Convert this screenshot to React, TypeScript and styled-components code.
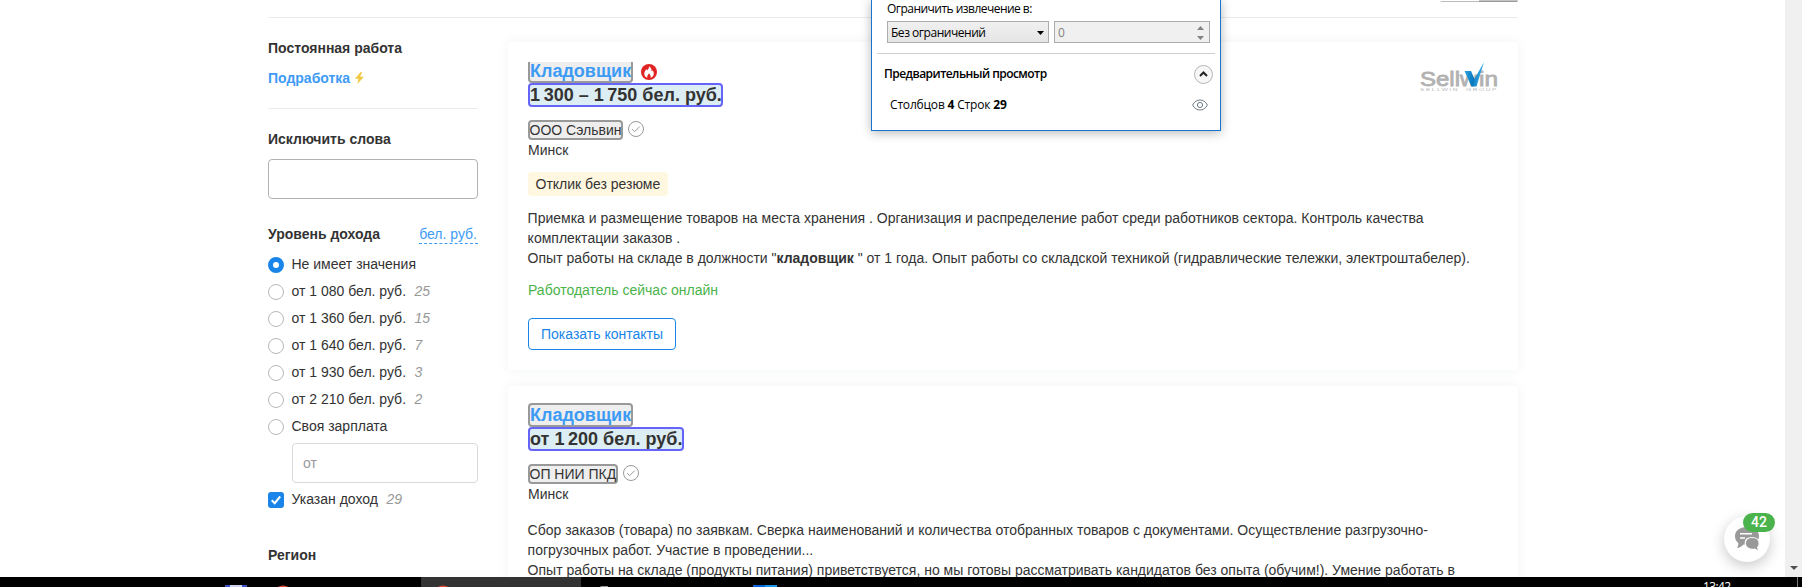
import React from "react";
import styled, { createGlobalStyle, css } from "styled-components";

const Global = createGlobalStyle`
  * { box-sizing: border-box; }
  body { margin: 0; background: #fff; font-family: "Liberation Sans", Arial, sans-serif; font-size: 14px; line-height: 20px; color: #333; overflow: hidden; }
`;

const Screen = styled.div`
  position: relative;
  display: flex;
  flex-direction: column;
  height: 587px;
  overflow: hidden;
`;
const Browser = styled.div`
  display: flex;
  height: 577px;
  overflow: hidden;
`;
const Viewport = styled.main`
  flex: 1;
  padding-left: 268px;
  overflow: hidden;
`;
const Scrollbar = styled.div`
  width: 17px;
  background: #f0f0f0;
  display: flex;
  flex-direction: column;
  justify-content: flex-end;
  align-items: center;
  padding-bottom: 7px;
`;
const Content = styled.div`
  width: 1250px;
`;
const TopBar = styled.header`
  height: 18px;
  display: flex;
  justify-content: flex-end;
  align-items: flex-start;
  border-bottom: 1px solid #ebebeb;
`;
const Toggle = styled.div`
  display: flex;
  width: 78px;
  height: 2px;
  overflow: hidden;
  border-radius: 0 0 4px 4px;
`;
const ToggleHalf = styled.span<{ $on?: boolean }>`
  flex: 1;
  background: ${(p) => (p.$on ? "#c4c4c4" : "#fff")};
  border-bottom: 1px solid ${(p) => (p.$on ? "#999" : "#bbb")};
`;
const Columns = styled.div`
  display: flex;
  gap: 30px;
`;
const Sidebar = styled.aside`
  width: 210px;
  padding-top: 20px;
`;
const Heading = styled.div`
  font-weight: 700;
`;
const SideLink = styled.a`
  display: flex;
  align-items: center;
  gap: 5px;
  margin-top: 10px;
  padding-bottom: 20px;
  height: 41px;
  border-bottom: 1px solid #ebebeb;
  font-weight: 700;
  color: #3d9bf5;
`;
const Section = styled.section<{ $top: number }>`
  margin-top: ${(p) => p.$top}px;
`;
const SectionHead = styled.div`
  display: flex;
  justify-content: space-between;
  height: 20px;
  margin-bottom: 10px;
`;
const Currency = styled.a`
  height: 20px;
  padding: 0 1px 0 0;
  color: #3d9bf5;
  border-bottom: 1px dashed #3d9bf5;
`;
const Field = styled.div<{ $inset?: boolean }>`
  height: 40px;
  border: 1px solid ${(p) => (p.$inset ? "#d9d9d9" : "#b3b3b3")};
  border-radius: 4px;
  padding: 9px 10px;
  color: #999;
  ${(p) => (p.$inset ? css`margin: 2px 0 6px 24px;` : css`margin-top: 10px;`)}
`;
const Option = styled.label<{ $last?: boolean }>`
  display: flex;
  height: 20px;
  margin-bottom: ${(p) => (p.$last ? 0 : 7)}px;
  white-space: pre;
`;
const Radio = styled.i<{ $on?: boolean }>`
  width: 16px;
  height: 16px;
  margin: 3px 7.500px 0 0;
  border-radius: 50%;
  background: #fff;
  border: ${(p) => (p.$on ? "5px solid #1a85e8" : "1px solid #b8b8b8")};
`;
const Check = styled.i`
  width: 16px;
  height: 16px;
  margin: 3px 7.500px 0 0;
  border-radius: 3px;
  background: #1a85e8;
  display: flex;
`;
const Count = styled.em`
  margin-left: 8.500px;
  color: #999;
`;
const Cards = styled.div`
  width: 1010px;
  padding-top: 24px;
`;
const Card = styled.article`
  height: 328px;
  margin-bottom: 16px;
  padding: 20px;
  border-radius: 4px;
  background: #fff;
  box-shadow: 0 0 12px rgba(40, 80, 70, 0.07);
  display: flex;
  justify-content: space-between;
`;
const CardBody = styled.div`
  width: 950px;
`;
const TitleRow = styled.div<{ $clip?: boolean }>`
  display: flex;
  height: 21px;
  align-items: flex-end;
  gap: 8px;
  ${(p) => p.$clip && css`overflow: hidden;`}
`;
const outlined = css`
  display: block;
  width: fit-content;
  white-space: nowrap;
  border-radius: 4px;
`;
const Title = styled.a`
  ${outlined}
  flex: none;
  width: 105px;
  height: 24px;
  border: 2px solid #999;
  background: #eee;
  color: #3d9bf5;
  font: 700 18px/20px "Liberation Sans", Arial, sans-serif;
`;
const Salary = styled.div<{ $w: number }>`
  ${outlined}
  width: ${(p) => p.$w}px;
  height: 24px;
  border: 2px solid #6464f8;
  background: #dcedf3;
  font-weight: 700;
  font-size: 18px;
  line-height: 20px;
`;
const Thousand = styled.span`
  letter-spacing: -0.7px;
`;
const CompanyRow = styled.div`
  display: flex;
  gap: 5px;
  margin-top: 13px;
  height: 20px;
`;
const Company = styled.span<{ $w: number }>`
  ${outlined}
  width: ${(p) => p.$w}px;
  height: 20px;
  border: 2px solid #999;
  background: #eee;
  line-height: 16px;
  text-indent: -0.5px;
`;
const Tag = styled.div`
  width: 140px;
  height: 24px;
  margin-top: 12px;
  padding: 2px 0 2px 7.500px;
  border-radius: 4px;
  background: #fff7e0;
  white-space: nowrap;
`;
const Desc = styled.div<{ $top: number }>`
  margin: ${(p) => p.$top}px 0 0 -0.4px;
  white-space: nowrap;
`;
const Online = styled.div`
  margin-top: 12px;
  color: #4bb34b;
`;
const Contacts = styled.button`
  display: block;
  width: 148px;
  height: 32px;
  margin-top: 18px;
  padding: 0;
  border: 1px solid #1a85e8;
  border-radius: 4px;
  background: #fff;
  color: #1a85e8;
  font: 14px/28px "Liberation Sans", Arial, sans-serif;
`;
const Popup = styled.div`
  position: absolute;
  left: 871px;
  top: -1px;
  width: 350px;
  height: 132px;
  border: 1px solid #1874cd;
  background: #fff;
  box-shadow: 0 2px 10px rgba(0, 0, 0, 0.28);
  padding: 1px 5px 0;
  color: #000;
  font: 12px/16px "Open Sans", "Noto Sans", sans-serif;
  white-space: nowrap;
`;
const PopLabel = styled.div`
  height: 20px;
  padding-left: 10px;
  letter-spacing: -0.53px;
`;
const PopFields = styled.div`
  display: flex;
  gap: 5px;
  padding: 0 5px 9px 10px;
  border-bottom: 1px solid #cfcfcf;
  height: 33px;
`;
const PopBox = styled.div<{ $w: number; $disabled?: boolean }>`
  width: ${(p) => p.$w}px;
  height: 22px;
  display: flex;
  align-items: center;
  justify-content: space-between;
  border: 1px solid #acacac;
  background: ${(p) => (p.$disabled ? "#f0f0f0" : "linear-gradient(#f0f0f0, #e5e5e5)")};
  color: ${(p) => (p.$disabled ? "#838383" : "#000")};
  padding: 1px ${(p) => (p.$disabled ? 5 : 4)}px 0 3px;
  letter-spacing: -0.47px;
`;
const PopRow = styled.div<{ $bold?: boolean }>`
  display: flex;
  justify-content: space-between;
  align-items: center;
  height: ${(p) => (p.$bold ? 40 : 21)}px;
  padding: ${(p) => (p.$bold ? "0 2px 0 7px" : "0 7px 0 13px")};
  font-weight: ${(p) => (p.$bold ? 600 : 400)};
  letter-spacing: ${(p) => (p.$bold ? -0.54 : -0.18)}px;
  svg { flex: none; }
`;
const Chat = styled.div`
  position: absolute;
  left: 1724px;
  top: 516px;
  width: 46px;
  height: 46px;
  border-radius: 50%;
  background: #fff;
  box-shadow: 0 4px 14px rgba(0, 0, 0, 0.22);
  display: flex;
  padding: 11px 0 0 11px;
`;
const Badge = styled.span`
  position: absolute;
  left: 19px;
  top: -3px;
  width: 32px;
  height: 19px;
  border-radius: 10px;
  background: #4bb34b;
  color: #fff;
  text-align: center;
  font: 500 14px/19px Roboto, sans-serif;
`;
const Taskbar = styled.footer`
  display: flex;
  height: 10px;
  background: #000;
  overflow: hidden;
`;
const TaskItem = styled.div<{ $w: number; $active?: boolean; $pad: number }>`
  flex: none;
  width: ${(p) => p.$w}px;
  padding-left: ${(p) => p.$pad}px;
  background: ${(p) => (p.$active ? "#333" : "transparent")};
  svg { display: block; }
`;
const Clock = styled.div`
  width: 95px;
  margin: 0 4px 0 auto;
  border-right: 1px solid #777;
  padding-top: 4px;
  color: #fff;
  font: 12px/12px "Open Sans", sans-serif;
  letter-spacing: -0.6px;
`;
const VerifiedIcon = styled.svg`
  margin-top: 1px;
`;
const FireIcon = styled.svg`
  margin-bottom: 3px;
`;
const LogoArt = styled.svg`
  flex: none;
  margin-left: -60px;
`;

const Bolt = () => (
  <svg width="9" height="12" viewBox="0 0 9 12"><path d="M5.600 0 0 6.800h3.400L2.300 12 9 4.800H5.200L7 0z" fill="#f2c744" /></svg>
);
const Verified = () => (
  <VerifiedIcon width="16" height="16" viewBox="0 0 16 16" fill="none">
    <circle cx="8" cy="8" r="7.500" stroke="#999" />
    <path d="m4.200 8.200 2.500 2.400 5-5" stroke="#999" />
  </VerifiedIcon>
);
const Fire = () => (
  <FireIcon width="16" height="16" viewBox="0 0 16 16">
    <circle cx="8" cy="8" r="8" fill="#e02424" />
    <path d="M8 2.200c.3 2-1 3-1.800 4.200-.3-.4-.5-.8-.5-1.300C4.300 6.500 3.300 8 3.300 9.700c0 2 1.200 3.500 3 4.100-.6-1.700.7-2.800 1.700-4.500 1 1.500 2.200 2.800 1.600 4.500 1.900-.6 3.200-2.200 3.200-4.300 0-1.300-.5-2.400-1.300-3.300-.1.600-.4 1-.9 1.200C10.800 5.200 9.800 3.300 8 2.200z" fill="#fff" />
  </FireIcon>
);
const Logo = () => (
  <LogoArt width="78" height="32" viewBox="0 0 78 32">
    <defs>
      <linearGradient id="tick" x1="0" y1="0" x2="1" y2="0.200">
        <stop offset="0" stopColor="#35aee8" /><stop offset="0.550" stopColor="#0878c0" /><stop offset="1" stopColor="#45b4ea" />
      </linearGradient>
    </defs>
    <g fill="#b2b2b2" stroke="#b2b2b2" strokeWidth="0.800" fontFamily="Liberation Sans" fontSize="20.500">
      <text x="0" y="24" textLength="40" lengthAdjust="spacingAndGlyphs">Sell</text>
      <text x="40" y="24" textLength="17" lengthAdjust="spacingAndGlyphs">w</text>
      <text x="59" y="24" textLength="19" lengthAdjust="spacingAndGlyphs">in</text>
    </g>
    <path d="M44.500 9h6.500l3.500 8L64 0 56.500 24.500h-5z" fill="url(#tick)" />
    <g fontFamily="Liberation Sans" fontSize="4.200" fill="#b8b8b8">
      <text x="0" y="29" textLength="39" letterSpacing="1" lengthAdjust="spacingAndGlyphs">SELLWIN</text>
      <text x="46" y="29" textLength="32" letterSpacing="1" lengthAdjust="spacingAndGlyphs">GROUP</text>
    </g>
  </LogoArt>
);

const levels: [string, string?][] = [
  ["Не имеет значения"],
  ["от 1 080 бел. руб.", "25"],
  ["от 1 360 бел. руб.", "15"],
  ["от 1 640 бел. руб.", "7"],
  ["от 1 930 бел. руб.", "3"],
  ["от 2 210 бел. руб.", "2"],
  ["Своя зарплата"],
];

export default function App() {
  return (
    <Screen>
      <Global />
      <Browser>
        <Viewport>
          <Content>
            <TopBar><Toggle><ToggleHalf /><ToggleHalf $on /></Toggle></TopBar>
            <Columns>
              <Sidebar>
                <Heading>Постоянная работа</Heading>
                <SideLink>Подработка <Bolt /></SideLink>
                <Section $top={20}>
                  <Heading>Исключить слова</Heading>
                  <Field />
                </Section>
                <Section $top={25}>
                  <SectionHead><Heading>Уровень дохода</Heading><Currency>бел. руб.</Currency></SectionHead>
                  {levels.map(([label, count], i) => (
                    <Option key={label}><Radio $on={i === 0} />{label}{count && <Count>{count}</Count>}</Option>
                  ))}
                  <Field $inset>от</Field>
                  <Option $last>
                    <Check><svg width="16" height="16" viewBox="0 0 16 16" fill="none"><path d="m3.700 8.300 3 2.900 5.500-6.700" stroke="#fff" strokeWidth="2" /></svg></Check>
                    Указан доход<Count>29</Count>
                  </Option>
                </Section>
                <Section $top={36}><Heading>Регион</Heading></Section>
              </Sidebar>
              <Cards>
                <Card>
                  <CardBody>
                    <TitleRow $clip><Title>Кладовщик</Title><Fire /></TitleRow>
                    <Salary $w={195}><Thousand>1 </Thousand>300 – <Thousand>1 </Thousand>750 бел. руб.</Salary>
                    <CompanyRow><Company $w={95}>ООО Сэльвин</Company><Verified /></CompanyRow>
                    <div>Минск</div>
                    <Tag>Отклик без резюме</Tag>
                    <Desc $top={12}>
                      Приемка и размещение товаров на места хранения . Организация и распределение работ среди работников сектора. Контроль качества<br />
                      комплектации заказов .<br />
                      Опыт работы на складе в должности "<b>кладовщик</b> " от 1 года. Опыт работы со складской техникой (гидравлические тележки, электроштабелер).
                    </Desc>
                    <Online>Работодатель сейчас онлайн</Online>
                    <Contacts>Показать контакты</Contacts>
                  </CardBody>
                  <Logo />
                </Card>
                <Card>
                  <CardBody>
                    <TitleRow><Title>Кладовщик</Title></TitleRow>
                    <Salary $w={156}>от <Thousand>1 </Thousand>200 бел. руб.</Salary>
                    <CompanyRow><Company $w={90}>ОП НИИ ПКД</Company><Verified /></CompanyRow>
                    <div>Минск</div>
                    <Desc $top={16}>
                      Сбор заказов (товара) по заявкам. Сверка наименований и количества отобранных товаров с документами. Осуществление разгрузочно-<br />
                      погрузочных работ. Участие в проведении...<br />
                      Опыт работы на складе (продукты питания) приветствуется, но мы готовы рассматривать кандидатов без опыта (обучим!). Умение работать в
                    </Desc>
                  </CardBody>
                </Card>
              </Cards>
            </Columns>
          </Content>
        </Viewport>
        <Scrollbar><svg width="8" height="4" viewBox="0 0 8 4"><path d="M0 0h8L4 4z" fill="#505050" /></svg></Scrollbar>
      </Browser>
      <Taskbar>
        <TaskItem $w={421} $pad={225}>
          <svg width="70" height="10" viewBox="0 0 70 10"><path d="M0 8h22v2H0z" fill="#3f51c8" /><path d="M5 8h12v2H5z" fill="#ccd3ea" /><circle cx="58" cy="19" r="10.500" fill="#d9483b" /></svg>
        </TaskItem>
        <TaskItem $w={160} $pad={11} $active>
          <svg width="22" height="10" viewBox="0 0 22 10"><circle cx="11" cy="19" r="10.500" fill="#d9483b" /></svg>
        </TaskItem>
        <TaskItem $w={250} $pad={19}>
          <svg width="180" height="10" viewBox="0 0 180 10"><path d="M0 9h8v1H1z" fill="#999" /><path d="M153 8h12v2h-12z" fill="#0a63dc" /><path d="M165 8h12v2h-12z" fill="#1c96ea" /></svg>
        </TaskItem>
        <Clock>13:42</Clock>
      </Taskbar>
      <Popup>
        <PopLabel>Ограничить извлечение в:</PopLabel>
        <PopFields>
          <PopBox $w={162}>Без ограничений<svg width="7" height="4" viewBox="0 0 7 4"><path d="M0 0h7L3.500 4z" /></svg></PopBox>
          <PopBox $w={156} $disabled>0<svg width="7" height="14" viewBox="0 0 7 14"><path d="M0 4h7L3.500 0zM0 10h7l-3.500 4z" fill="#838383" /></svg></PopBox>
        </PopFields>
        <PopRow $bold>Предварительный просмотр
          <svg width="19" height="19" viewBox="0 0 19 19" fill="none"><circle cx="9.500" cy="9.500" r="9" fill="#f7f7f7" stroke="#b5b5b5" /><path d="m6 11 3.500-3.500L13 11" stroke="#222" strokeWidth="2" /></svg>
        </PopRow>
        <PopRow><span>Столбцов <b>4</b> Строк <b>29</b></span>
          <svg width="16" height="12" viewBox="0 0 16 12" fill="none" stroke="#6f7c87"><path d="M.6 6C4-.7 12-.7 15.400 6 12 12.700 4 12.700.6 6z" /><circle cx="8" cy="6" r="2.600" /></svg>
        </PopRow>
      </Popup>
      <Chat>
        <svg width="25" height="25" viewBox="0 0 25 25" fill="#999"><path d="M12 0c6 0 12 3 12 9s-5 9-12 9c-1.500 0-2.500 0-3.500-.4C6.500 20 4 21 2 21c1-1.500 1.500-3 1.300-5C1 14 0 12 0 9c0-6 6-9 12-9z" /><path d="M5 6.700h12M5 11h5" stroke="#fff" strokeWidth="1.500" /><path d="M17 10.500c4.500 0 7.200 2.500 7.200 6 0 1.700-.6 3-1.500 4 .1 1 .6 2 1.200 2.900-1.700 0-3-.5-4-1.300-5 .9-9.700-1.400-9.700-5.800 0-3.400 2.600-5.800 6.800-5.800z" stroke="#fff" strokeWidth="1.200" /></svg>
        <Badge>42</Badge>
      </Chat>
    </Screen>
  );
}
